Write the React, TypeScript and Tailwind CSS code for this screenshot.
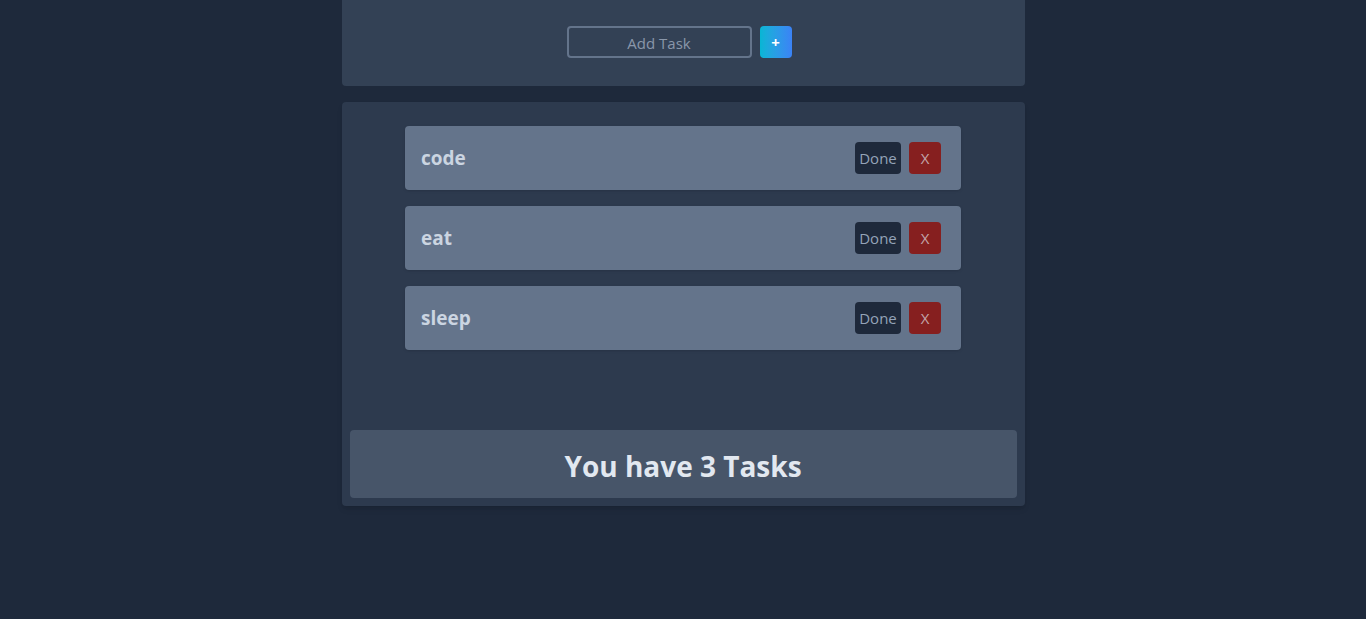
import { useState } from "react";

type Task = { id: number; title: string; done: boolean };

const initialTasks: Task[] = [
  { id: 1, title: "code", done: false },
  { id: 2, title: "eat", done: false },
  { id: 3, title: "sleep", done: false },
];

export default function App() {
  const [tasks, setTasks] = useState<Task[]>(initialTasks);
  const [text, setText] = useState("");

  const addTask = () => {
    if (!text.trim()) return;
    setTasks([...tasks, { id: Date.now(), title: text.trim(), done: false }]);
    setText("");
  };

  return (
    <div className="min-h-screen bg-[#1e293b] font-['Open_Sans','Noto_Sans',sans-serif]">
      <div className="mx-auto w-1/2">
        {/* add task */}
        <div className="flex h-[86px] items-center justify-center gap-2 rounded-b bg-[#334155] pb-0.5 pr-2">
          <input
            value={text}
            onChange={(e) => setText(e.target.value)}
            placeholder="Add Task"
            className="h-8 w-[185px] rounded border-2 border-[#64748b] bg-transparent pt-0.5 text-center text-[15px] text-slate-300 outline-none placeholder:text-[#8a97aa]"
          />
          <button
            onClick={addTask}
            className="flex h-8 w-8 items-center justify-center rounded bg-gradient-to-r from-[#06b6d4] to-[#3b82f6] text-[15px] font-bold text-white"
          >
            +
          </button>
        </div>

        {/* list */}
        <div className="mt-4 rounded bg-[#2d3a4e] p-2 shadow-md">
          <div className="flex h-80 flex-col items-center gap-4 pt-4">
            {tasks.map((t) => (
              <div
                key={t.id}
                className="flex h-16 w-[556px] items-center justify-between rounded bg-[#64748b] pl-4 pr-5 shadow"
              >
                <span
                  className={`text-[19px] font-bold text-[#cbd5e1] ${t.done ? "line-through" : ""}`}
                >
                  {t.title}
                </span>
                <div className="flex items-center gap-2">
                  <button
                    onClick={() =>
                      setTasks(tasks.map((x) => (x.id === t.id ? { ...x, done: !x.done } : x)))
                    }
                    className="h-8 w-[46px] rounded-sm bg-[#1e293b] text-[15px] text-[#94a3b8]"
                  >
                    Done
                  </button>
                  <button
                    onClick={() => setTasks(tasks.filter((x) => x.id !== t.id))}
                    className="h-8 w-8 rounded-sm bg-[#861f1f] text-[15px] text-[#c3a6ac]"
                  >
                    X
                  </button>
                </div>
              </div>
            ))}
          </div>
          <div className="flex h-[68px] items-center justify-center rounded bg-[#475569]">
            <h2 className="pt-1 text-[28px] font-bold text-[#e2e8f0]">You have {tasks.length} Tasks</h2>
          </div>
        </div>
      </div>
    </div>
  );
}
